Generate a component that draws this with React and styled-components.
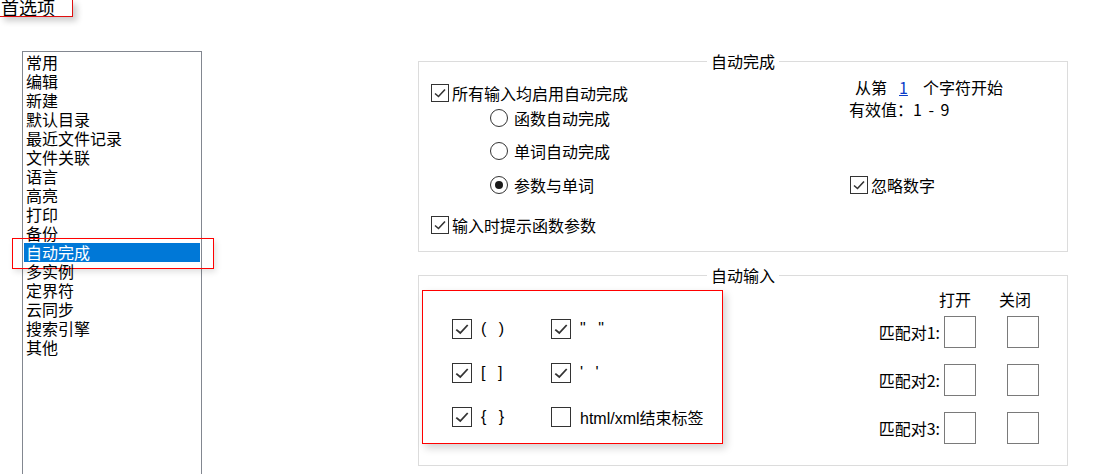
import React from 'react';
import styled, { createGlobalStyle } from 'styled-components';

const Global = createGlobalStyle`
    html, body {
        margin: 0;
        padding: 0;
        background: #fff;
        overflow: hidden;
    }
    body {
        font-family: "Noto Sans CJK SC", "Liberation Sans", sans-serif;
        font-size: 16px;
        color: #000;
    }
`;

const Page = styled.div`
    width: 1098px;
    height: 474px;
`;

const TopButton = styled.div`
    width: 71px;
    height: 16px;
    padding-left: 1px;
    border-right: 1px solid #e01010;
    border-bottom: 1px solid #e01010;
    box-shadow: 4px 4px 6px rgba(0, 0, 0, 0.2);
    font-size: 18px;
    line-height: 14px;
    overflow: hidden;
    white-space: nowrap;
`;

const Main = styled.div`
    display: flex;
    align-items: flex-start;
`;

const List = styled.div`
    margin: 34px 0 0 22px;
    width: 178px;
    height: 440px;
    border: 1px solid #828790;
    padding-top: 1px;
    box-sizing: content-box;
`;

const Item = styled.div`
    position: relative;
    height: 19px;
    line-height: 19px;
    margin-left: ${p => (p.$selected ? 1 : 3)}px;
    padding-left: ${p => (p.$selected ? 2 : 0)}px;
    margin-right: 1px;
    background: ${p => (p.$selected ? '#0078d7' : 'transparent')};
    color: ${p => (p.$selected ? '#fff' : '#000')};
    white-space: nowrap;
`;

const Mark = styled.div`
    position: absolute;
    left: -12px;
    right: -14px;
    top: -5px;
    bottom: -7px;
    border: 1px solid #ff0000;
    box-shadow: 2px 3px 6px rgba(0, 0, 0, 0.12);
    pointer-events: none;
`;

const Panels = styled.div`
    margin-left: 216px;
    margin-top: 34px;
    width: 650px;
    display: flex;
    flex-direction: column;
    gap: 13px;
`;

const GroupHead = styled.div`
    display: flex;
    height: 20px;
    align-items: center;
`;

const HeadLine = styled.div`
    flex: 1;
    align-self: flex-end;
    height: 9px;
    border-top: 1px solid #dcdcdc;
    border-left: ${p => (p.$side === 'left' ? '1px solid #dcdcdc' : 'none')};
    border-right: ${p => (p.$side === 'right' ? '1px solid #dcdcdc' : 'none')};
`;

const GroupTitle = styled.div`
    padding: 0 4px;
    line-height: 20px;
`;

const GroupBody = styled.div`
    height: ${p => p.$h}px;
    border: 1px solid #dcdcdc;
    border-top: none;
    display: flex;
    justify-content: space-between;
    align-items: flex-start;
`;

const Column = styled.div`
    display: flex;
    flex-direction: column;
    margin-left: ${p => p.$ml || 0}px;
    margin-top: ${p => p.$mt || 0}px;
    width: ${p => (p.$w ? p.$w + 'px' : 'auto')};
`;

const Row = styled.div`
    display: flex;
    align-items: center;
    height: 24px;
    margin-top: ${p => p.$mt || 0}px;
    margin-left: ${p => p.$ml || 0}px;
    white-space: nowrap;
`;

const Box = styled.span`
    display: inline-flex;
    align-items: center;
    justify-content: center;
    width: ${p => p.$size}px;
    height: ${p => p.$size}px;
    box-sizing: border-box;
    border: 1px solid #333;
    background: #fff;
    flex-shrink: 0;
`;

const Label = styled.span`
    margin-left: ${p => p.$ml || 3}px;
`;

const Radio = styled.span`
    display: inline-flex;
    align-items: center;
    justify-content: center;
    width: 18px;
    height: 18px;
    box-sizing: border-box;
    border: 1px solid #333;
    border-radius: 50%;
    flex-shrink: 0;
`;

const Dot = styled.span`
    width: 8px;
    height: 8px;
    border-radius: 50%;
    background: #1a1a1a;
`;

const Link = styled.span`
    color: #0a3cc8;
    text-decoration: underline;
    margin: 0 15px 0 12px;
`;

const Range = styled.span`
    word-spacing: 3px;
`;

const Annot = styled.div`
    margin: 5px 0 0 3px;
    width: 301px;
    height: 154px;
    border: 1px solid #ff0000;
    box-shadow: 3px 4px 8px rgba(0, 0, 0, 0.18);
    display: grid;
    grid-template-columns: 99px 1fr;
    grid-template-rows: repeat(3, 20px);
    row-gap: 24px;
    padding: 28px 0 0 29px;
    box-sizing: border-box;
`;

const Cell = styled.div`
    display: flex;
    align-items: center;
    white-space: nowrap;
`;

const Bracket = styled.span`
    margin-left: 9px;
    font-family: "Liberation Sans", "Noto Sans CJK SC", sans-serif;
    font-size: 16px;
    word-spacing: 8px;
`;

const PairGrid = styled.div`
    margin: 4px 28px 0 0;
    display: grid;
    grid-template-columns: auto 36px 63px;
    grid-template-rows: 11px 32px 32px 32px;
    row-gap: 16px;
    align-items: center;
`;

const PairHead = styled.div`
    align-self: start;
    justify-self: end;
    margin-right: ${p => p.$mr}px;
    line-height: 20px;
    white-space: nowrap;
`;

const PairLabel = styled.div`
    text-align: right;
    white-space: nowrap;
`;

const PairBox = styled.div`
    justify-self: end;
    width: 32px;
    height: 32px;
    box-sizing: border-box;
    border: 1px solid #7a7a7a;
`;

const Check = ({ size = 18, checked = true }) => (
    <Box $size={size}>
        {checked && (
            <svg width={size - 4} height={size - 4} viewBox="0 0 14 14">
                <polyline points="2,7.5 5.5,10.5 12,3.5" fill="none" stroke="#333" strokeWidth="1.6" />
            </svg>
        )}
    </Box>
);

const Group = ({ title, h, children }) => (
    <div>
        <GroupHead>
            <HeadLine $side="left" />
            <GroupTitle>{title}</GroupTitle>
            <HeadLine $side="right" />
        </GroupHead>
        <GroupBody $h={h}>{children}</GroupBody>
    </div>
);

const items = ['常用', '编辑', '新建', '默认目录', '最近文件记录', '文件关联', '语言', '高亮', '打印', '备份', '自动完成', '多实例', '定界符', '云同步', '搜索引擎', '其他'];

export default function App() {
    return (
        <Page>
            <Global />
            <TopButton>首选项</TopButton>
            <Main>
                <List>
                    {items.map(it => (
                        <Item key={it} $selected={it === '自动完成'}>
                            {it}
                            {it === '自动完成' && <Mark />}
                        </Item>
                    ))}
                </List>
                <Panels>
                    <Group title="自动完成" h={180}>
                        <Column $ml={12} $mt={10}>
                            <Row>
                                <Check />
                                <Label>所有输入均启用自动完成</Label>
                            </Row>
                            <Row $ml={59} $mt={1}>
                                <Radio />
                                <Label $ml={6}>函数自动完成</Label>
                            </Row>
                            <Row $ml={59} $mt={9}>
                                <Radio />
                                <Label $ml={6}>单词自动完成</Label>
                            </Row>
                            <Row $ml={59} $mt={10}>
                                <Radio><Dot /></Radio>
                                <Label $ml={6}>参数与单词</Label>
                            </Row>
                            <Row $mt={16}>
                                <Check />
                                <Label>输入时提示函数参数</Label>
                            </Row>
                        </Column>
                        <Column $mt={4} $w={218}>
                            <Row $ml={6}>
                                从第<Link>1</Link>个字符开始
                            </Row>
                            <Row $mt={-2}>有效值：<Range>1 - 9</Range></Row>
                            <Row $ml={1} $mt={52}>
                                <Check />
                                <Label>忽略数字</Label>
                            </Row>
                        </Column>
                    </Group>
                    <Group title="自动输入" h={180}>
                        <Annot>
                            <Cell><Check size={20} /><Bracket>( )</Bracket></Cell>
                            <Cell><Check size={20} /><Bracket>" "</Bracket></Cell>
                            <Cell><Check size={20} /><Bracket>[ ]</Bracket></Cell>
                            <Cell><Check size={20} /><Bracket>' '</Bracket></Cell>
                            <Cell><Check size={20} /><Bracket>{'{ }'}</Bracket></Cell>
                            <Cell><Check size={20} checked={false} /><Bracket>html/xml结束标签</Bracket></Cell>
                        </Annot>
                        <PairGrid>
                            <span />
                            <PairHead $mr={5}>打开</PairHead>
                            <PairHead $mr={8}>关闭</PairHead>
                            {[1, 2, 3].map(n => (
                                <React.Fragment key={n}>
                                    <PairLabel>匹配对{n}:</PairLabel>
                                    <PairBox />
                                    <PairBox />
                                </React.Fragment>
                            ))}
                        </PairGrid>
                    </Group>
                </Panels>
            </Main>
        </Page>
    );
}
